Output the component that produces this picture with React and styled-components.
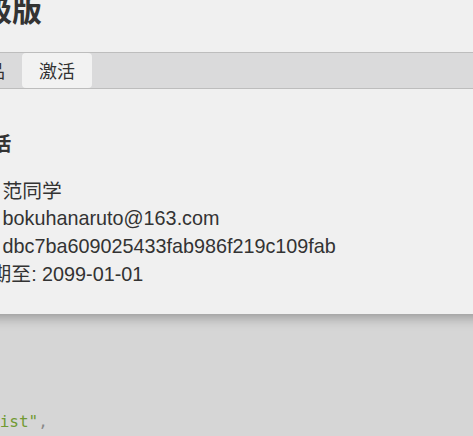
import React from "react";
import styled, { createGlobalStyle } from "styled-components";

const Global = createGlobalStyle`
  html, body { margin: 0; padding: 0; overflow: hidden; }
  body { font-family: "Liberation Sans", "Noto Sans CJK SC", sans-serif; }
`;

const Screen = styled.div`
  position: relative;
  width: 473px;
  height: 436px;
  overflow: hidden;
  background: #d6d6d6;
`;

const Editor = styled.div`
  height: 100%;
  box-sizing: border-box;
  display: flex;
  flex-direction: column;
  justify-content: flex-end;
  padding-bottom: 4px;
  font-family: "DejaVu Sans Mono", monospace;
  font-size: 16px;
  line-height: 20px;
  white-space: pre;
`;

const CodeLine = styled.div`
  margin-left: -10px;
`;

const Str = styled.span`
  color: #719a33;
`;

const Punct = styled.span`
  color: #8a8a8a;
`;

const Dialog = styled.div`
  position: absolute;
  left: -72px;
  top: -28px;
  width: 620px;
  padding-top: 16px;
  background: #f0f0f0;
  box-shadow: 0 3px 12px rgba(0, 0, 0, 0.32);
  color: #333;
`;

const Title = styled.h1`
  margin: 0;
  padding-left: 24px;
  font-family: "Noto Sans CJK SC", sans-serif;
  font-size: 30px;
  font-weight: 700;
  line-height: 40px;
  color: #333;
`;

const TabBar = styled.div`
  margin-top: 24px;
  height: 37px;
  box-sizing: border-box;
  display: flex;
  padding-left: 24px;
  background: #dadadb;
  border-top: 1px solid #bdbdbd;
  border-bottom: 1px solid #bdbdbd;
`;

const Tab = styled.div`
  height: 35px;
  padding: 0 17px;
  font-family: "Noto Sans CJK SC", sans-serif;
  font-size: 18px;
  line-height: 35px;
  color: #333;
  border-radius: 4px;
  background: ${(p) => (p.$active ? "#f2f2f2" : "transparent")};
`;

const Body = styled.div`
  padding: 42px 24px 25px;
  font-size: 19.8px;
  line-height: 27.72px;
`;

const Heading = styled.h3`
  margin: 0 0 19px;
  font-size: 19.8px;
  font-weight: 700;
  line-height: 27.72px;
`;

const Line = styled.div`
  white-space: nowrap;
`;

export default function App() {
  return (
    <>
      <Global />
      <Screen>
        <Editor>
          <CodeLine>
            <Str>list"</Str>
            <Punct>,</Punct>
          </CodeLine>
        </Editor>
        <Dialog>
          <Title>升级版</Title>
          <TabBar>
            <Tab>产品</Tab>
            <Tab $active>激活</Tab>
          </TabBar>
          <Body>
            <Heading>已激活</Heading>
            <Line>用户: 范同学</Line>
            <Line>邮箱: bokuhanaruto@163.com</Line>
            <Line>卡密: dbc7ba609025433fab986f219c109fab</Line>
            <Line>有效期至: 2099-01-01</Line>
          </Body>
        </Dialog>
      </Screen>
    </>
  );
}
